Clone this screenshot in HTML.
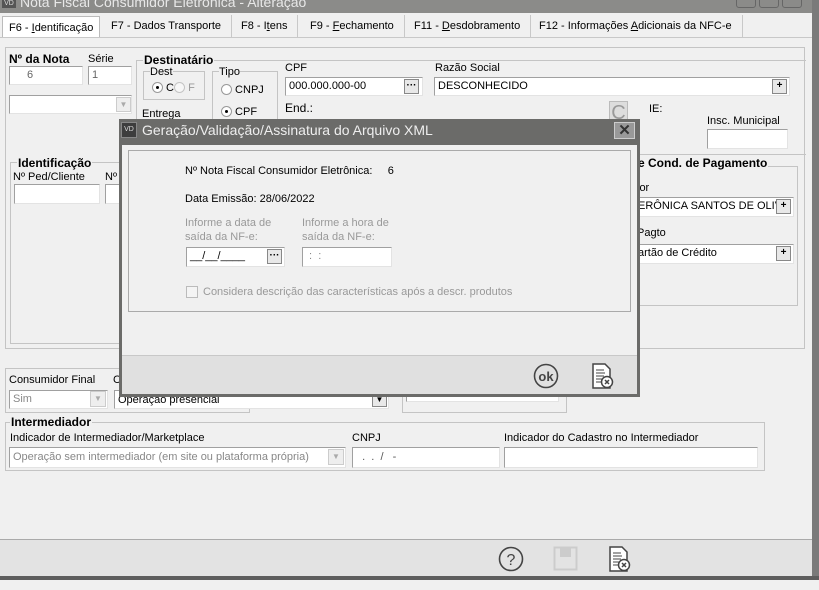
<!DOCTYPE html>
<html><head><meta charset="utf-8"><style>
*{box-sizing:border-box;margin:0;padding:0}
body{width:819px;height:590px;overflow:hidden;background:#f0f0f0;font-family:"Liberation Sans",sans-serif;font-size:11px;color:#000;position:relative}
.a{position:absolute;white-space:nowrap}
.in{position:absolute;background:#fff;border:1px solid #a0a0a0;border-right-color:#e3e3e3;border-bottom-color:#e3e3e3;font-size:11px;padding:1px 3px;line-height:15px}
.dis{background:#f0f0f0;color:#888}
.gb{position:absolute;border:1px solid #c4c4c4}
.gt{position:absolute;background:#f0f0f0;padding:0 1px;font-weight:bold;font-size:12px;line-height:12px}
.btn{position:absolute;width:15px;height:15px;background:#e8e8e8;border:1px solid #888;font-size:10px;text-align:center;line-height:12px;font-weight:bold}
.rad{display:inline-block;width:11px;height:11px;border-radius:50%;border:1px solid #999;background:#fff;vertical-align:-2px;position:relative}
.rad.on:after{content:"";position:absolute;left:3px;top:3px;width:3px;height:3px;border-radius:50%;background:#000}
.tab{position:absolute;top:15px;height:22px;line-height:22px;font-size:11px;border-right:1px solid #c8c8c8;padding:0 10px}
</style></head><body>
<!-- title bar -->
<div class="a" style="left:0;top:0;width:819px;height:13px;background:#8b8b89"></div>
<div class="a" style="left:2px;top:-6px;width:14px;height:14px;background:#555;color:#ddd;font-size:7px;text-align:center;line-height:20px">VD</div>
<div class="a" style="left:20px;top:-6px;color:#e8e8e8;font-size:14px">Nota Fiscal Consumidor Eletrônica - Alteração</div>
<div class="a" style="left:736px;top:-6px;width:20px;height:14px;border:1px solid #666;border-radius:3px"></div>
<div class="a" style="left:759px;top:-6px;width:20px;height:14px;border:1px solid #666;border-radius:3px"></div>
<div class="a" style="left:782px;top:-6px;width:20px;height:14px;border:1px solid #666;border-radius:3px"></div>
<div class="a" style="left:812px;top:0;width:7px;height:580px;background:#7a7a7a"></div>
<!-- tabs -->
<div class="a" style="left:0;top:37px;width:812px;height:1px;background:#c8c8c8"></div>
<div class="tab" style="left:2px;top:16px;height:21px;background:#fff;border:1px solid #bbb;border-bottom:none;padding:0 6px">F6 - <u>I</u>dentificação</div>
<div class="tab" style="left:101px">F7 - Dados Transporte</div>
<div class="tab" style="left:231px">F8 - I<u>t</u>ens</div>
<div class="tab" style="left:300px">F9 - <u>F</u>echamento</div>
<div class="tab" style="left:404px">F11 - <u>D</u>esdobramento</div>
<div class="tab" style="left:529px">F12 - Informações <u>A</u>dicionais da NFC-e</div>
<!-- main panel -->
<div class="gb" style="left:5px;top:47px;width:800px;height:302px"></div>
<div class="a" style="left:9px;top:52px;font-weight:bold;font-size:12px">Nº da Nota</div>
<div class="a" style="left:88px;top:53px">Série</div>
<div class="in" style="left:9px;top:66px;width:74px;height:19px;color:#666;padding-left:17px">6</div>
<div class="in" style="left:88px;top:66px;width:44px;height:19px;color:#666">1</div>
<div class="in" style="left:9px;top:95px;width:123px;height:19px"></div>
<div class="a" style="left:116px;top:97px;width:15px;height:15px;background:#eee;border:1px solid #ccc;color:#aaa;font-size:8px;text-align:center;line-height:13px">▼</div>
<div class="gb" style="left:136px;top:60px;width:670px;height:95px;border-right:none"></div>
<div class="gt" style="left:143px;top:54px">Destinatário</div>
<div class="gb" style="left:143px;top:71px;width:62px;height:29px"></div>
<div class="a" style="left:150px;top:66px;background:#f0f0f0">Dest</div>
<div class="a" style="left:152px;top:82px;color:#000"><span class="rad on"></span> C<span class="rad" style="opacity:.5"></span> <span style="color:#999">F</span></div>
<div class="a" style="left:142px;top:108px">Entrega</div>
<div class="gb" style="left:212px;top:71px;width:66px;height:60px"></div>
<div class="a" style="left:219px;top:66px;background:#f0f0f0">Tipo</div>
<div class="a" style="left:221px;top:84px"><span class="rad"></span> CNPJ</div>
<div class="a" style="left:221px;top:106px"><span class="rad on"></span> CPF</div>
<div class="a" style="left:285px;top:62px">CPF</div>
<div class="in" style="left:285px;top:77px;width:138px;height:19px">000.000.000-00</div>
<div class="btn" style="left:404px;top:79px">···</div>
<div class="a" style="left:285px;top:101px;font-size:12px">End.:</div>
<div class="a" style="left:435px;top:62px">Razão Social</div>
<div class="in" style="left:434px;top:77px;width:356px;height:19px">DESCONHECIDO</div>
<div class="btn" style="left:772px;top:79px">+</div>
<div class="a" style="left:609px;top:101px;width:19px;height:22px;background:#ddd;border:1px solid #bbb;font-size:20px;color:#999;line-height:22px;text-align:center">C</div>
<div class="a" style="left:649px;top:103px">IE:</div>
<div class="a" style="left:707px;top:115px">Insc. Municipal</div>
<div class="in" style="left:707px;top:129px;width:81px;height:20px"></div>
<div class="gb" style="left:10px;top:162px;width:140px;height:182px"></div>
<div class="gt" style="left:17px;top:157px">Identificação</div>
<div class="a" style="left:13px;top:171px">Nº Ped/Cliente</div>
<div class="a" style="left:105px;top:171px">Nº</div>
<div class="in" style="left:14px;top:184px;width:86px;height:20px"></div>
<div class="in" style="left:105px;top:184px;width:30px;height:20px"></div>
<div class="gb" style="left:630px;top:166px;width:168px;height:140px"></div>
<div class="gt" style="left:637px;top:157px">e Cond. de Pagamento</div>
<div class="a" style="left:637px;top:182px">lor</div>
<div class="in" style="left:634px;top:197px;width:160px;height:20px">ERÔNICA SANTOS DE OLIVE</div>
<div class="btn" style="left:776px;top:199px">+</div>
<div class="a" style="left:637px;top:227px">Pagto</div>
<div class="in" style="left:634px;top:244px;width:160px;height:20px">artão de Crédito</div>
<div class="btn" style="left:776px;top:246px">+</div>
<!-- consumidor row -->
<div class="gb" style="left:5px;top:368px;width:245px;height:45px"></div>
<div class="a" style="left:9px;top:374px">Consumidor Final</div>
<div class="a" style="left:113px;top:374px">C</div>
<div class="in dis" style="left:9px;top:390px;width:99px;height:19px;background:#fff">Sim</div>
<div class="a" style="left:90px;top:391px;width:16px;height:16px;background:#eee;border:1px solid #ccc;color:#aaa;font-size:8px;text-align:center;line-height:14px">▼</div>
<div class="in" style="left:114px;top:390px;width:275px;height:19px;line-height:16px">Operaçao presencial</div>
<div class="a" style="left:372px;top:392px;width:15px;height:15px;background:#e8e8e8;border:1px solid #888;font-size:8px;text-align:center;line-height:13px">▼</div>
<div class="gb" style="left:402px;top:368px;width:165px;height:45px"></div>
<div class="in" style="left:406px;top:388px;width:153px;height:14px"></div>
<div class="gb" style="left:5px;top:422px;width:760px;height:49px"></div>
<div class="gt" style="left:10px;top:416px">Intermediador</div>
<div class="a" style="left:10px;top:432px">Indicador de Intermediador/Marketplace</div>
<div class="a" style="left:352px;top:432px">CNPJ</div>
<div class="a" style="left:504px;top:432px">Indicador do Cadastro no Intermediador</div>
<div class="in" style="left:9px;top:447px;width:337px;height:21px;color:#888;line-height:17px">Operação sem intermediador (em site ou plataforma própria)</div>
<div class="a" style="left:328px;top:449px;width:16px;height:16px;background:#eee;border:1px solid #ccc;color:#aaa;font-size:8px;text-align:center;line-height:14px">▼</div>
<div class="in" style="left:352px;top:447px;width:148px;height:21px;line-height:17px;color:#555">&nbsp; . &nbsp;. &nbsp;/ &nbsp;&nbsp;-</div>
<div class="in" style="left:504px;top:447px;width:254px;height:21px"></div>
<!-- bottom toolbar -->
<div class="a" style="left:0;top:539px;width:812px;height:39px;background:#e3e3e3;border-top:1px solid #aaa"></div>
<div class="a" style="left:0;top:576px;width:819px;height:4px;background:#5e5e5e"></div>
<svg class="a" style="left:497px;top:545px" width="28" height="28"><circle cx="14" cy="14" r="11.5" fill="none" stroke="#444" stroke-width="1.6"/><text x="14" y="20" font-size="16" text-anchor="middle" fill="#444" font-family="Liberation Sans">?</text></svg>
<svg class="a" style="left:553px;top:546px" width="26" height="26"><rect x="1.5" y="1.5" width="22" height="22" fill="none" stroke="#ccc" stroke-width="2"/><rect x="7" y="2" width="11" height="9" fill="#ccc"/></svg>
<svg class="a" style="left:607px;top:545px" width="26" height="28"><path d="M3 2h12l5 5v19H3z" fill="#fff" stroke="#444" stroke-width="1.5"/><path d="M6 8h8M6 11h9M6 14h8M6 17h6M6 20h6" stroke="#444"/><circle cx="17" cy="20" r="5.5" fill="#fff" stroke="#444" stroke-width="1.5"/><path d="M15 18l4 4M19 18l-4 4" stroke="#444" stroke-width="1.5"/></svg>
<!-- modal dialog -->
<div class="a" style="left:119px;top:119px;width:521px;height:278px;background:#6b6b69"></div>
<div class="a" style="left:121px;top:122px;width:16px;height:16px;background:#3d3d3d;border:1px solid #888;color:#ddd;font-size:7px;text-align:center;line-height:14px">VD</div>
<div class="a" style="left:142px;top:122px;color:#eee;font-size:14px">Geração/Validação/Assinatura do Arquivo XML</div>
<div class="a" style="left:614px;top:122px;width:21px;height:17px;background:#999;border:1px solid #ccc;color:#333;font-weight:bold;font-size:15px;text-align:center;line-height:15px">✕</div>
<div class="a" style="left:122px;top:145px;width:515px;height:249px;background:#f0f0f0"></div>
<div class="a" style="left:122px;top:355px;width:515px;height:39px;background:#e0e0e0;border-top:1px solid #c8c8c8"></div>
<div class="gb" style="left:128px;top:150px;width:503px;height:162px;border-color:#aaa"></div>
<div class="a" style="left:185px;top:165px">Nº Nota Fiscal Consumidor Eletrônica: &nbsp;&nbsp;&nbsp;&nbsp;6</div>
<div class="a" style="left:185px;top:193px">Data Emissão: 28/06/2022</div>
<div class="a" style="left:185px;top:216px;color:#999;white-space:normal;line-height:14px;width:100px">Informe a data de saída da NF-e:</div>
<div class="a" style="left:302px;top:216px;color:#999;white-space:normal;line-height:14px;width:100px">Informe a hora de saída da NF-e:</div>
<div class="in" style="left:186px;top:247px;width:99px;height:20px">__/__/____</div>
<div class="btn" style="left:267px;top:249px">···</div>
<div class="in" style="left:302px;top:247px;width:90px;height:20px;color:#888">&nbsp;: &nbsp;:</div>
<div class="a" style="left:186px;top:286px;width:12px;height:12px;border:1px solid #bbb;background:#f4f4f4"></div>
<div class="a" style="left:203px;top:286px;color:#999">Considera descrição das características após a descr. produtos</div>
<svg class="a" style="left:533px;top:363px" width="28" height="28"><circle cx="13" cy="13" r="11.5" fill="none" stroke="#444" stroke-width="1.6"/><text x="13" y="18" font-size="13" font-weight="bold" text-anchor="middle" fill="#444" font-family="Liberation Sans">ok</text></svg>
<svg class="a" style="left:590px;top:362px" width="26" height="28"><path d="M3 2h12l5 5v19H3z" fill="#fff" stroke="#444" stroke-width="1.5"/><path d="M6 8h8M6 11h9M6 14h8M6 17h6M6 20h6" stroke="#444"/><circle cx="17" cy="20" r="5.5" fill="#fff" stroke="#444" stroke-width="1.5"/><path d="M15 18l4 4M19 18l-4 4" stroke="#444" stroke-width="1.5"/></svg>
</body></html>
